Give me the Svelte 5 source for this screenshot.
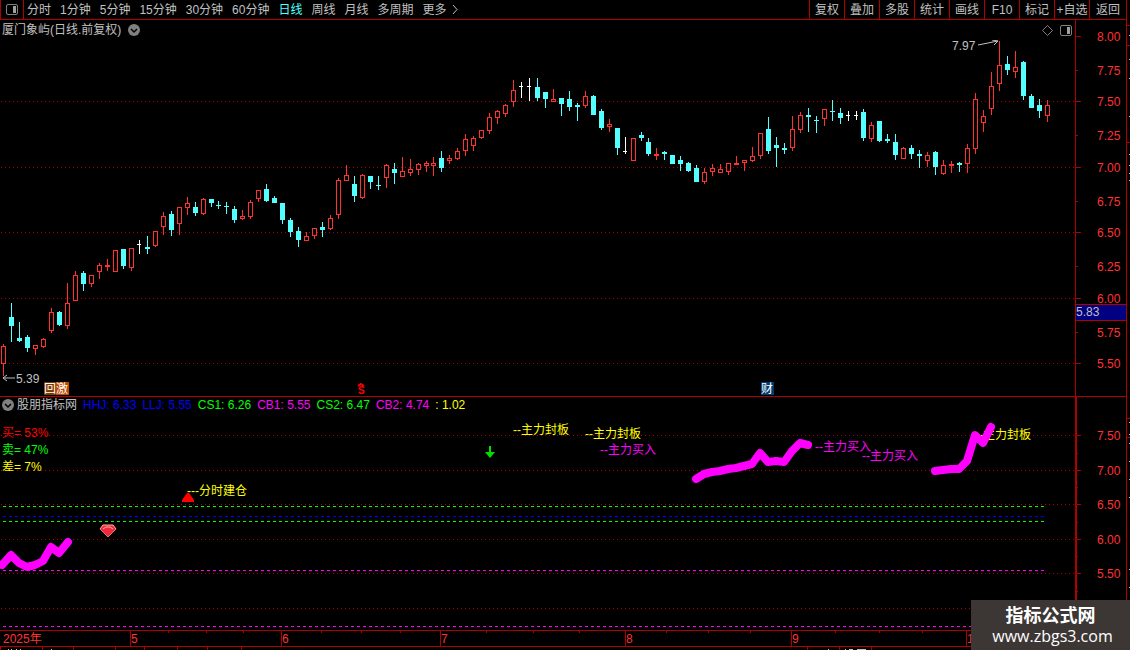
<script lang="ts">
  type Kind = 'up' | 'down' | 'flat';
  type Bar = [kind: string, high: number, top: number, bottom: number, low: number];

  const periods = ['分时', '1分钟', '5分钟', '15分钟', '30分钟', '60分钟', '日线', '周线', '月线', '多周期', '更多'];
  const tools = ['复权', '叠加', '多股', '统计', '画线', 'F10', '标记', '+自选', '返回'];

  let period = $state('日线');

  const kinds: Record<string, Kind> = { u: 'up', d: 'down', w: 'flat' };

  // kind, high, body top, body bottom, low (rows of the screen)
  const bars: Bar[] = [
    ['u', 344, 346, 364, 376], ['d', 303, 317, 326, 342], ['d', 322, 338, 341, 342], ['d', 335, 337, 348, 352],
    ['u', 345, 345, 349, 355], ['u', 338, 339, 347, 348], ['u', 308, 312, 331, 333], ['d', 311, 312, 325, 326],
    ['u', 283, 303, 326, 329], ['u', 271, 275, 301, 301], ['d', 271, 273, 284, 291], ['u', 275, 275, 284, 287],
    ['u', 263, 265, 272, 279], ['u', 259, 265, 267, 271], ['u', 250, 250, 272, 272], ['d', 249, 249, 266, 269],
    ['u', 248, 248, 268, 271], ['w', 240, 244, 245, 254], ['d', 236, 247, 249, 254], ['u', 231, 231, 246, 247],
    ['u', 212, 216, 227, 235], ['d', 211, 214, 230, 236], ['u', 207, 207, 224, 235], ['u', 197, 203, 208, 215],
    ['d', 202, 207, 213, 216], ['u', 198, 199, 214, 215], ['d', 199, 199, 203, 207], ['d', 201, 205, 206, 209],
    ['d', 202, 206, 207, 214], ['d', 206, 209, 220, 223], ['u', 210, 216, 219, 220], ['u', 200, 202, 217, 219],
    ['u', 190, 190, 199, 202], ['d', 184, 189, 201, 202], ['d', 196, 198, 203, 203], ['d', 203, 203, 220, 224],
    ['d', 218, 220, 232, 237], ['d', 227, 231, 240, 247], ['u', 232, 236, 241, 241], ['u', 228, 228, 236, 239],
    ['d', 222, 227, 230, 237], ['u', 215, 218, 229, 230], ['u', 178, 180, 215, 219], ['u', 165, 175, 181, 181],
    ['d', 176, 184, 196, 202], ['u', 174, 175, 198, 199], ['d', 176, 176, 182, 189], ['d', 176, 185, 186, 190],
    ['u', 164, 165, 178, 188], ['d', 163, 169, 173, 184], ['u', 157, 171, 177, 177], ['u', 159, 169, 173, 176],
    ['u', 163, 164, 170, 175], ['u', 161, 163, 166, 172], ['u', 157, 163, 166, 176], ['d', 151, 158, 168, 172],
    ['u', 155, 158, 161, 164], ['u', 148, 151, 159, 160], ['u', 134, 139, 151, 156], ['u', 136, 138, 146, 151],
    ['u', 130, 130, 138, 139], ['u', 113, 117, 131, 134], ['u', 110, 111, 118, 124], ['u', 104, 105, 114, 117],
    ['u', 80, 90, 102, 107], ['w', 82, 86, 87, 98], ['w', 78, 86, 87, 101], ['d', 78, 87, 98, 101],
    ['d', 92, 92, 99, 108], ['u', 89, 99, 102, 102], ['d', 98, 98, 104, 116], ['d', 91, 99, 107, 111],
    ['d', 103, 105, 107, 121], ['u', 91, 96, 106, 108], ['d', 95, 96, 115, 115], ['d', 109, 111, 128, 130],
    ['u', 119, 124, 127, 132], ['d', 128, 128, 148, 155], ['w', 137, 151, 152, 154], ['u', 138, 138, 161, 161],
    ['d', 132, 135, 138, 141], ['d', 138, 142, 154, 156], ['u', 148, 154, 156, 160], ['d', 151, 152, 154, 160],
    ['d', 155, 155, 164, 164], ['d', 156, 160, 164, 171], ['d', 162, 163, 171, 172], ['d', 165, 168, 182, 182],
    ['u', 168, 172, 182, 184], ['u', 164, 168, 172, 176], ['u', 164, 169, 173, 173], ['u', 163, 163, 172, 175],
    ['u', 156, 163, 165, 165], ['u', 160, 160, 163, 171], ['u', 147, 156, 161, 162], ['u', 133, 133, 156, 159],
    ['d', 117, 129, 151, 154], ['d', 137, 145, 148, 167], ['d', 143, 148, 150, 154], ['u', 116, 129, 148, 151],
    ['u', 112, 115, 130, 133], ['d', 108, 115, 117, 132], ['d', 116, 120, 121, 133], ['u', 109, 109, 119, 126],
    ['d', 100, 111, 112, 121], ['d', 108, 113, 118, 124], ['w', 111, 115, 116, 121], ['w', 111, 115, 116, 120],
    ['d', 109, 112, 138, 141], ['u', 122, 125, 139, 142], ['d', 121, 121, 141, 142], ['d', 134, 139, 141, 143],
    ['d', 134, 142, 155, 160], ['u', 147, 148, 159, 159], ['d', 145, 148, 154, 159], ['d', 150, 154, 156, 168],
    ['u', 152, 155, 161, 167], ['d', 151, 152, 167, 175], ['u', 160, 165, 174, 175], ['u', 161, 164, 166, 173],
    ['d', 162, 163, 165, 172], ['u', 144, 148, 164, 173], ['u', 93, 99, 149, 154], ['u', 110, 116, 123, 132],
    ['u', 72, 86, 109, 115], ['u', 41, 65, 84, 91], ['d', 56, 64, 70, 75], ['u', 51, 67, 72, 78],
    ['d', 61, 62, 96, 100], ['d', 94, 96, 108, 108], ['d', 99, 105, 111, 118], ['u', 100, 105, 116, 122],
  ];

  // every 27th bar loses one pixel of spacing
  const candles = bars.map(([k, high, top, bottom, low], i) => ({
    kind: kinds[k],
    x: 3 + i * 8 - Math.floor(i / 27),
    high,
    top,
    bottom,
    low,
  }));

  const priceTicks = [
    { y: 36, label: '8.00' }, { y: 70, label: '7.75' }, { y: 101, label: '7.50' }, { y: 135, label: '7.25' },
    { y: 167, label: '7.00' }, { y: 201, label: '6.75' }, { y: 232, label: '6.50' }, { y: 266, label: '6.25' },
    { y: 298, label: '6.00' }, { y: 332, label: '5.75' }, { y: 363, label: '5.50' },
  ];
  const priceGrid = [101, 167, 232, 298, 363];

  const valueTicks = [
    { y: 435, label: '7.50' }, { y: 470, label: '7.00' }, { y: 504, label: '6.50' },
    { y: 539, label: '6.00' }, { y: 573, label: '5.50' },
  ];
  const valueMinor = [453, 487, 522, 556, 591];
  const valueGrid = [435, 470, 504, 539, 573, 608];

  const levels = [
    { y: 506, fill: 'url(#dash-green)' },
    { y: 516, fill: 'url(#dash-blue)' },
    { y: 521, fill: 'url(#dash-green)' },
    { y: 570, fill: 'url(#dash-pink)' },
    { y: 626, fill: 'url(#dash-pink)' },
  ];
  const dashes = [
    { id: 'dash-green', color: '#00ff00' },
    { id: 'dash-blue', color: '#0000ff' },
    { id: 'dash-pink', color: '#ff00ff' },
  ];

  const readings = [
    { text: 'HHJ: 6.33', tone: 'blue' },
    { text: 'LLJ: 5.55', tone: 'blue' },
    { text: 'CS1: 6.26', tone: 'green' },
    { text: 'CB1: 5.55', tone: 'pink' },
    { text: 'CS2: 6.47', tone: 'green' },
    { text: 'CB2: 4.74', tone: 'pink' },
    { text: ': 1.02', tone: 'yellow' },
  ];

  const notes = [
    { x: 2, y: 437, text: '买= 53%', tone: 'red' },
    { x: 2, y: 454, text: '卖= 47%', tone: 'green' },
    { x: 2, y: 471, text: '差= 7%', tone: 'yellow' },
    { x: 187, y: 495, text: '---分时建仓', tone: 'yellow' },
    { x: 513, y: 434, text: '--主力封板', tone: 'yellow' },
    { x: 585, y: 438, text: '--主力封板', tone: 'yellow' },
    { x: 600, y: 454, text: '--主力买入', tone: 'pink' },
    { x: 815, y: 451, text: '--主力买入', tone: 'pink' },
    { x: 862, y: 460, text: '--主力买入', tone: 'pink' },
    { x: 975, y: 439, text: '--主力封板', tone: 'yellow' },
  ];

  const trends = [
    '2,565 11,555 19,563 27,567 35,565 43,561 51,547 59,553 68,542',
    '696,479 704,474 712,472 720,471 728,469 736,468 744,466 752,464 760,453 768,462 776,461 784,462 792,451 800,443 808,445',
    '935,471 943,470 951,469 959,469 967,461 975,435 983,443 991,427',
  ];

  const months = [
    { x: 130, label: '5' }, { x: 281, label: '6' }, { x: 440, label: '7' },
    { x: 625, label: '8' }, { x: 791, label: '9' }, { x: 966, label: '10' },
  ];
  const weekTicks = [168, 206, 243, 321, 361, 400, 486, 533, 579, 666, 708, 750, 835, 879, 922];
  const footTicks = [0, 42, 73, 115, 144, 177, 207, 241, 807, 839, 871];

  // tops of the glyphs in the row under the time axis
  const footMarks = [
    { x: 8, width: 1 }, { x: 11, width: 1 }, { x: 16, width: 1 }, { x: 20, width: 1 },
    { x: 51, width: 1 }, { x: 828, width: 1 }, { x: 845, width: 1 }, { x: 849, width: 4 }, { x: 857, width: 9 },
  ];
</script>

{#snippet toggleIcon()}
  <svg width="12" height="12" viewBox="0 0 12 12" aria-hidden="true">
    <circle cx="6" cy="6" r="6" fill="#808080" />
    <path d="M3 5l3 3 3-3" fill="none" stroke="#000" stroke-width="1.5" />
  </svg>
{/snippet}

{#snippet panelIcon()}
  <svg width="12" height="11" viewBox="0 0 12 11" aria-hidden="true">
    <rect x="0.5" y="0.5" width="11" height="10" rx="1.5" fill="none" stroke="#808080" />
    <rect x="7" y="2" width="3" height="7" fill="#a0a0a0" />
  </svg>
{/snippet}

<div class="terminal">
  <div class="main">
    <nav class="toolbar">
      <button class="layout" aria-label="布局">{@render panelIcon()}</button>
      <div class="periods">
        {#each periods as name}
          <button class:active={name === period} onclick={() => (period = name)}>{name}</button>
        {/each}
        <svg class="more" width="6" height="9" viewBox="0 0 6 9" aria-hidden="true">
          <path d="M1 0l4 4.5L1 9" fill="none" stroke="#c0c0c0" />
        </svg>
      </div>
      <div class="tools">
        {#each tools as name}
          <button>{name}</button>
        {/each}
      </div>
    </nav>

    <section class="panel price">
      <div class="view">
        <header class="title">
          <span>厦门象屿(日线.前复权)</span>
          <button aria-label="展开">{@render toggleIcon()}</button>
          <div class="title-icons">
            <svg width="11" height="11" viewBox="0 0 11 11" aria-hidden="true">
              <path d="M5.5 0.5l5 5-5 5-5-5z" fill="none" stroke="#808080" />
            </svg>
            <button aria-label="侧栏">{@render panelIcon()}</button>
          </div>
        </header>
        <svg class="plot" width="100%" height="356">
          <defs>
            <pattern id="dots" width="4" height="1" patternUnits="userSpaceOnUse">
              <rect x="1" width="1" height="1" fill="#b00000" />
            </pattern>
          </defs>
          <g transform="translate(0 -40)">
            {#each priceGrid as y}
              <rect x="0" {y} width="100%" height="1" fill="url(#dots)" />
            {/each}

            {#each candles as c}
              <g class={c.kind}>
                <rect x={c.x} y={c.high} width="1" height={c.low - c.high} />
                <rect x={c.x - 2} y={c.top} width={c.kind === 'flat' ? 4 : 5} height={c.bottom - c.top} />
                {#if c.kind === 'up' && c.bottom - c.top > 2}
                  <rect class="hollow" x={c.x - 1} y={c.top + 1} width="3" height={c.bottom - c.top - 2} />
                {/if}
              </g>
            {/each}

            <path class="pointer" d="M978 45L998 41M992 40l6 1-4 4" />
            <text class="grey" x="952" y="50">7.97</text>
            <path class="pointer" d="M3 378H15M7 375l-4 3 4 3" />
            <text class="grey" x="16" y="383">5.39</text>

            <rect x="44" y="382" width="12" height="13" fill="#7c3a00" />
            <rect x="56" y="382" width="13" height="13" fill="#c04800" />
            <text class="white" x="44" y="393">回激</text>
            <rect x="761" y="382" width="13" height="13" fill="#003c70" />
            <text class="white" x="761" y="393">财</text>

            <path d="M358 386l3-2 3 2" fill="none" stroke="#ff0000" stroke-width="2" />
            <text class="signal" x="358" y="394">S</text>
          </g>
        </svg>
      </div>
      <svg class="axis" width="50" height="376">
        <g transform="translate(0 -20)">
          {#each priceTicks as tick, i}
            <rect x="0" y={tick.y} width={i % 2 ? 2 : 5} height="1" fill="#b00000" />
            <text x="21" y={tick.y + 5}>{tick.label}</text>
          {/each}
          <rect x="0" y="304" width="50" height="17" fill="#b00000" />
          <rect x="0" y="305" width="50" height="15" fill="#000080" />
          <text class="grey" x="0" y="316">5.83</text>
        </g>
      </svg>
    </section>

    <section class="panel indicator">
      <div class="view">
        <header class="readings">
          <button aria-label="展开">{@render toggleIcon()}</button>
          <span>股朋指标网</span>
          {#each readings as reading}
            <span class={reading.tone}>{reading.text}</span>
          {/each}
        </header>
        <svg class="plot" width="100%" height="217">
          <defs>
            {#each dashes as dash}
              <pattern id={dash.id} width="6" height="1" patternUnits="userSpaceOnUse">
                <rect x="3" width="3" height="1" fill={dash.color} />
              </pattern>
            {/each}
          </defs>
          <g transform="translate(0 -413)">
            {#each valueGrid as y}
              <rect x="0" {y} width="100%" height="1" fill="url(#dots)" />
            {/each}
            {#each levels as level}
              <rect x="3" y={level.y} width="1041" height="1" fill={level.fill} />
            {/each}

            {#each notes as note}
              <text class={note.tone} x={note.x} y={note.y}>{note.text}</text>
            {/each}

            {#each trends as points}
              <polyline class="trend" {points} />
            {/each}

            <path d="M187 493h2l5 7v2h-12v-2z" fill="#ff0000" />
            <path d="M489 446h2v6h4l-5 6-5-6h4z" fill="#00e000" />
            <path d="M103 525h10l3 4-8 8-8-8z" fill="#f02840" />
            <path d="M100 529l3-4h10l3 4M103 529l3-2h4l3 2" fill="none" stroke="#ffb0a0" />
            <path d="M100 529l8 8 8-8" fill="none" stroke="#d87860" />
          </g>
        </svg>
      </div>
      <svg class="axis" width="49" height="233">
        <g transform="translate(0 -397)">
          {#each valueTicks as tick}
            <rect x="0" y={tick.y} width="4" height="1" fill="#b00000" />
            <text x="20" y={tick.y + 5}>{tick.label}</text>
          {/each}
          {#each valueMinor as y}
            <rect x="0" {y} width="1" height="1" fill="#b00000" />
          {/each}
        </g>
      </svg>
    </section>

    <svg class="timeline" width="100%" height="15">
      {#each months as month}
        <rect x={month.x} y="0" width="1" height="15" fill="#b00000" />
        <text x={month.x + 1} y="12">{month.label}</text>
      {/each}
      {#each weekTicks as x}
        <rect {x} y="0" width="1" height="2" fill="#b00000" />
      {/each}
      <text x="3" y="12">2025年</text>
    </svg>
    <svg class="foot" width="100%" height="3">
      {#each footTicks as x}
        <rect {x} y="0" width="1" height="3" fill="#b00000" />
      {/each}
      {#each footMarks as mark}
        <rect x={mark.x} y="2" width={mark.width} height="1" fill="#c0c0c0" />
      {/each}
    </svg>
  </div>

  <svg class="edge" width="3" height="650">
    {#each [25, 45, 142, 418, 437] as y}
      <rect x="0" {y} width="3" height="1" fill="#b00000" />
    {/each}
    {#each [35, 59, 78, 116, 154, 165, 173, 180, 422, 434, 443, 461, 479, 497, 569, 587] as y}
      <rect x="2" {y} width="1" height="1" fill="#c0c0c0" />
    {/each}
  </svg>

  <aside class="watermark">
    <strong>指标公式网</strong>
    <span>www.zbgs3.com</span>
  </aside>
</div>

<style>
  :global(body) {
    background: #000;
  }

  .terminal {
    position: relative;
    display: flex;
    overflow: hidden;
    background: #000;
    color: #c0c0c0;
    font-family: 'Liberation Sans', 'Noto Sans CJK SC', sans-serif;
    font-size: 12px;
    line-height: 16px;
  }

  .main {
    flex: 1;
    min-width: 0;
  }

  svg {
    display: block;
    flex-shrink: 0;
  }

  button {
    display: flex;
    align-items: center;
    justify-content: center;
    padding: 0;
    border: 0;
    background: none;
    color: inherit;
    font: inherit;
    white-space: nowrap;
    cursor: pointer;
  }

  .toolbar {
    display: flex;
    height: 19px;
    border-bottom: 1px solid #b00000;
  }

  .layout {
    width: 24px;
    border: solid #b00000;
    border-width: 0 1px;
  }

  .periods {
    display: flex;
    flex: 1;
    gap: 9px;
    align-items: center;
    padding-left: 3px;
  }

  .periods .active {
    color: #54ffff;
  }

  .more {
    margin-left: -4px;
  }

  .tools {
    display: flex;
  }

  .tools button {
    width: 35px;
    border-left: 1px solid #b00000;
  }

  .tools button:last-child {
    width: 37px;
  }

  .panel {
    display: flex;
  }

  .view {
    flex: 1;
    min-width: 0;
  }

  .price {
    border-bottom: 1px solid #b00000;
  }

  .price .axis {
    border-left: 1px solid #b00000;
  }

  .indicator .axis {
    border-left: 2px solid #b00000;
  }

  .title {
    display: flex;
    gap: 7px;
    align-items: center;
    height: 20px;
    padding: 0 3px 0 2px;
  }

  .title-icons {
    display: flex;
    gap: 7px;
    align-items: center;
    margin-left: auto;
  }

  .readings {
    display: flex;
    gap: 6px;
    align-items: center;
    height: 16px;
    padding-left: 2px;
    white-space: nowrap;
  }

  .readings button {
    margin-right: -3px;
  }

  .plot rect {
    shape-rendering: crispEdges;
  }

  text {
    fill: #ff3232;
    white-space: pre;
  }

  .up {
    fill: #ff3232;
  }

  .down {
    fill: #54ffff;
  }

  .flat {
    fill: #fff;
  }

  .hollow {
    fill: #000;
  }

  .pointer {
    fill: none;
    stroke: #c0c0c0;
  }

  .grey {
    fill: #c0c0c0;
  }

  .white {
    fill: #fff;
  }

  .signal {
    fill: #ff0000;
    font-size: 10px;
    font-weight: bold;
  }

  .red {
    fill: #ff0000;
    color: #ff0000;
  }

  .green {
    fill: #00ff00;
    color: #00ff00;
  }

  .blue {
    fill: #0000ff;
    color: #0000ff;
  }

  .pink {
    fill: #ff00ff;
    color: #ff00ff;
  }

  .yellow {
    fill: #ffff00;
    color: #ffff00;
  }

  .trend {
    fill: none;
    stroke: #ff00ff;
    stroke-width: 8px;
    stroke-linecap: round;
    stroke-linejoin: round;
  }

  .timeline {
    border: solid #b00000;
    border-width: 1px 0;
  }

  .edge {
    border-left: 1px solid #b00000;
  }

  .watermark {
    position: absolute;
    right: 0;
    bottom: 0;
    display: flex;
    flex-direction: column;
    align-items: center;
    width: 159px;
    height: 46px;
    padding-top: 4px;
    background: #3c3635;
    color: #fff;
    font-family: 'Open Sans', 'Noto Sans CJK SC', sans-serif;
    font-size: 16px;
    line-height: 20px;
  }

  .watermark strong {
    font-size: 18px;
    line-height: 22px;
  }

  .watermark span {
    padding-left: 4px;
  }
</style>
